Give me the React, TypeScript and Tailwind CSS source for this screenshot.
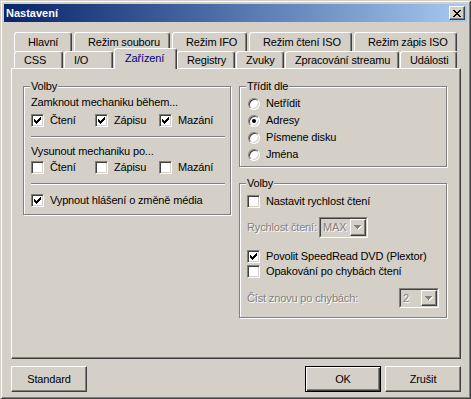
import React from "react";

const CHECK = ["......x", ".....xx", "x...xxx", "xx.xxx.", "xxxxx..", ".xxx...", "..x...."];
const CROSS = ["xx....xx", ".xx..xx.", "..xxxx..", "...xx...", "..xxxx..", ".xx..xx.", "xx....xx"];
const ARROW = ["xxxxxxx", ".xxxxx.", "..xxx..", "...x..."];

const raised =
  "border border-white border-r-[#404040] border-b-[#404040] shadow-[inset_-1px_-1px_0_#808080]";
const sunken =
  "border border-[#808080] border-r-white border-b-white shadow-[inset_1px_1px_0_#404040,inset_-1px_-1px_0_#d4d0c8]";
const disabledText = "text-[#808080] [text-shadow:1px_1px_0_#fff] whitespace-nowrap shrink-0";

function Pixels({ rows, color, shadow }: { rows: string[]; color: string; shadow?: string }) {
  const w = rows[0].length + (shadow ? 1 : 0);
  const h = rows.length + (shadow ? 1 : 0);
  const draw = (fill: string, dx: number) =>
    rows.flatMap((r, y) =>
      r.split("").map((c, x) =>
        c === "x" ? (
          <rect key={`${fill}-${x}-${y}`} x={x + dx} y={y + dx} width={1} height={1} fill={fill} />
        ) : null
      )
    );
  return (
    <svg width={w} height={h} viewBox={`0 0 ${w} ${h}`} shapeRendering="crispEdges">
      {shadow && draw(shadow, 1)}
      {draw(color, 0)}
    </svg>
  );
}

function Check({ label, checked, className = "" }: { label: string; checked?: boolean; className?: string }) {
  return (
    <div className={`flex items-center h-[13px] ${className}`}>
      <span className={`w-[13px] h-[13px] shrink-0 bg-white flex items-center justify-center ${sunken}`}>
        {checked && <Pixels rows={CHECK} color="#000" />}
      </span>
      <span className="ml-[6px] leading-[13px] whitespace-nowrap">{label}</span>
    </div>
  );
}

function Radio({ label, checked }: { label: string; checked?: boolean }) {
  return (
    <div className="flex items-center h-[17px]">
      <span className={`w-[12px] h-[12px] shrink-0 rounded-full bg-white flex items-center justify-center ${sunken}`}>
        {checked && <span className="w-[4px] h-[4px] rounded-full bg-black" />}
      </span>
      <span className="ml-[6px] leading-[13px]">{label}</span>
    </div>
  );
}

function Combo({ value, className }: { value: string; className: string }) {
  return (
    <div className={`shrink-0 border border-[#808080] border-r-white border-b-white ${className}`}>
      <div className="h-full flex border border-[#404040] border-r-[#d4d0c8] border-b-[#d4d0c8]">
        <span className={`flex-1 pl-[2px] flex items-center ${disabledText}`}>{value}</span>
        <span className={`w-[16px] h-full flex items-center justify-center ${raised}`}>
          <Pixels rows={ARROW} color="#808080" shadow="#ffffff" />
        </span>
      </div>
    </div>
  );
}

function Group({ title, className, children }: { title: string; className: string; children: React.ReactNode }) {
  return (
    <div className={`relative w-[208px] border border-[#808080] shadow-[inset_1px_1px_0_#fff,1px_1px_0_#fff] ${className}`}>
      <span className="absolute -top-[7px] left-[6px] px-[1px] bg-[#d4d0c8] leading-[13px]">{title}</span>
      {children}
    </div>
  );
}

function Separator() {
  return <div className="w-[194px] h-[2px] border-t border-[#808080] border-b border-b-white" />;
}

const backTabs = [
  { label: "Hlavní", w: "w-[58px]", ml: "" },
  { label: "Režim souboru", w: "w-[96px]", ml: "ml-[2px]" },
  { label: "Režim IFO", w: "w-[75px]", ml: "ml-[2px]" },
  { label: "Režim čtení ISO", w: "w-[103px]", ml: "ml-[2px]" },
  { label: "Režim zápis ISO", w: "w-[103px]", ml: "ml-[2px]" },
];

const frontTabs = [
  { label: "CSS", w: "w-[49px]", ml: "" },
  { label: "I/O", w: "w-[49px]", ml: "ml-[1px]" },
  { label: "Zařízení", w: "w-[63px]", ml: "ml-[1px]", active: true },
  { label: "Registry", w: "w-[58px]", ml: "" },
  { label: "Zvuky", w: "w-[48px]", ml: "ml-[1px]" },
  { label: "Zpracování streamu", w: "w-[114px]", ml: "ml-[1px]" },
  { label: "Události", w: "w-[57px]", ml: "ml-[1px]" },
];

const tabEdge =
  "border-t border-l border-white border-r border-r-[#404040] rounded-t-[3px] shadow-[inset_-1px_0_0_#808080] whitespace-nowrap";

export default function App() {
  return (
    <div className="w-[471px] h-[399px] bg-[#d4d0c8] p-[4px] text-[11px] tracking-[-0.15px] text-black font-['Liberation_Sans',Arial,sans-serif] shadow-[inset_1px_1px_0_#d4d0c8,inset_-1px_-1px_0_#404040,inset_2px_2px_0_#fff,inset_-2px_-2px_0_#808080] overflow-hidden">
      <div className="h-[18px] flex items-center justify-between bg-linear-to-r from-[#0a246a] to-[#a6caf0] pl-[2px] pr-[2px]">
        <span className="text-white font-bold leading-[13px] tracking-normal">Nastavení</span>
        <span className={`w-[16px] h-[14px] bg-[#d4d0c8] flex items-center justify-center ${raised}`}>
          <Pixels rows={CROSS} color="#000" />
        </span>
      </div>

      <div className="pl-[7px] pt-[10px]">
        <div className="flex h-[19px] pl-[3px]">
          {backTabs.map((t) => (
            <div key={t.label} className={`h-full flex items-center pl-[13px] ${t.w} ${t.ml} ${tabEdge}`}>
              {t.label}
            </div>
          ))}
        </div>
        <div className="flex items-end h-[17px] pl-[3px]">
          {frontTabs.map((t) =>
            t.active ? (
              <div
                key={t.label}
                className={`relative z-10 h-[21px] -mb-[1px] bg-[#d4d0c8] flex items-center pl-[10px] pb-[2px] text-[#000080] ${t.w} ${t.ml} ${tabEdge}`}
              >
                {t.label}
              </div>
            ) : (
              <div key={t.label} className={`h-[17px] flex items-center pl-[9px] ${t.w} ${t.ml} ${tabEdge}`}>
                {t.label}
              </div>
            )
          )}
        </div>

        <div className="w-[450px] h-[291px] border border-white border-r-[#404040] border-b-[#404040] shadow-[inset_-1px_-1px_0_#808080] pl-[11px] pt-[17px] flex gap-[8px] items-start">
          <Group title="Volby" className="h-[129px] pl-[7px] pt-[9px]">
            <div className="leading-[13px]">Zamknout mechaniku během...</div>
            <div className="flex mt-[5px]">
              <Check label="Čtení" checked className="w-[64px]" />
              <Check label="Zápisu" checked className="w-[64px]" />
              <Check label="Mazání" checked />
            </div>
            <div className="mt-[9px]">
              <Separator />
            </div>
            <div className="mt-[7px] leading-[13px]">Vysunout mechaniku po...</div>
            <div className="flex mt-[3px]">
              <Check label="Čtení" className="w-[64px]" />
              <Check label="Zápisu" className="w-[64px]" />
              <Check label="Mazání" />
            </div>
            <div className="mt-[9px]">
              <Separator />
            </div>
            <Check label="Vypnout hlášení o změně média" checked className="mt-[9px]" />
          </Group>

          <div className="flex flex-col gap-[16px]">
            <Group title="Třídit dle" className="h-[81px] pl-[8px] pt-[8px]">
              <Radio label="Netřídit" />
              <Radio label="Adresy" checked />
              <Radio label="Písmene disku" />
              <Radio label="Jména" />
            </Group>
            <Group title="Volby" className="h-[135px] pl-[7px] pt-[11px]">
              <Check label="Nastavit rychlost čtení" />
              <div className="flex items-center h-[21px] mt-[9px]">
                <span className={`w-[72px] ${disabledText}`}>Rychlost čtení:</span>
                <Combo value="MAX" className="w-[49px] h-[21px]" />
              </div>
              <Check label="Povolit SpeedRead DVD (Plextor)" checked className="mt-[12px]" />
              <Check label="Opakování po chybách čtení" className="mt-[2px]" />
              <div className="flex items-center h-[20px] mt-[10px]">
                <span className={`w-[152px] ${disabledText}`}>Číst znovu po chybách:</span>
                <Combo value="2" className="w-[40px] h-[20px]" />
              </div>
            </Group>
          </div>
        </div>

        <div className="mt-[7px] flex w-[450px]">
          <button className={`w-[76px] h-[26px] flex items-center justify-center ${raised}`}>Standard</button>
          <button className="ml-auto w-[76px] h-[26px] flex items-center justify-center border border-black shadow-[inset_1px_1px_0_#fff,inset_-1px_-1px_0_#404040,inset_-2px_-2px_0_#808080]">
            OK
          </button>
          <button className={`ml-[4px] w-[76px] h-[26px] flex items-center justify-center ${raised}`}>Zrušit</button>
        </div>
      </div>
    </div>
  );
}
